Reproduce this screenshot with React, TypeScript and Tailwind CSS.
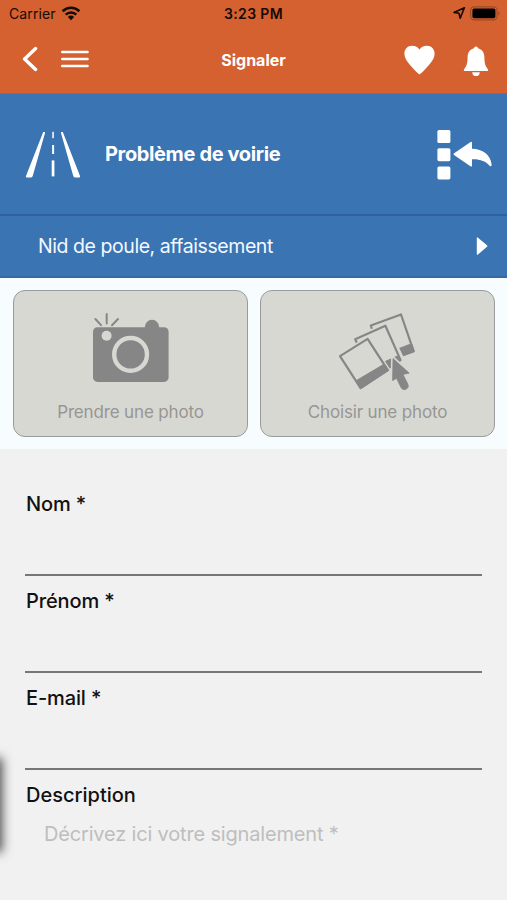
import { ReactNode } from 'react';

function WifiIcon() {
  return (
    <svg width="20" height="15" viewBox="0 0 20 15" fill="none" stroke="#160a05" strokeWidth="2.6">
      <path d="M1.6 5.2 A12 12 0 0 1 18.4 5.2" />
      <path d="M4.7 8.6 A7.6 7.6 0 0 1 15.3 8.6" />
      <path d="M10 14.2 L6.9 10.9 A4.4 4.4 0 0 1 13.1 10.9 Z" fill="#160a05" stroke="none" />
    </svg>
  );
}

function StatusBar() {
  return (
    <div className="grid h-[26px] grid-cols-3 items-center px-[6px] text-[14px] text-[#160a05]">
      <div className="flex items-center gap-[5px] pl-[3px]">
        <span className="tracking-[0.1px]">Carrier</span>
        <WifiIcon />
      </div>
      <span className="text-center font-semibold tracking-[0.35px] whitespace-nowrap">3:23 PM</span>
      <div className="flex items-center justify-end gap-[4px]">
        <svg width="14" height="14" viewBox="0 0 14 14" fill="none" stroke="#160a05" strokeWidth="1.6" strokeLinejoin="round">
          <path d="M12.4 1.7 L2 6.4 L7 7.3 L8.2 12.2 Z" />
        </svg>
        <svg width="31" height="15" viewBox="0 0 31 15">
          <rect x="0.6" y="0.9" width="26.5" height="13" rx="3.6" fill="none" stroke="#9c4a24" strokeWidth="1.1" />
          <rect x="2.4" y="2.6" width="23" height="9.6" rx="1.8" fill="#000" />
          <path d="M28.4 5.2 Q31 7.4 28.4 9.6 Z" fill="#9c4a24" />
        </svg>
      </div>
    </div>
  );
}

function NavBar() {
  return (
    <div className="grid h-[67px] grid-cols-3 items-center px-[18px] text-white">
      <div className="flex items-center gap-[23px] pb-[2px] pl-[4px]">
        <svg width="16" height="26" viewBox="0 0 16 26" fill="none" stroke="currentColor" strokeWidth="3.4">
          <path d="M13.6 2.6 L2.6 13 L13.6 23.4" strokeLinecap="round" strokeLinejoin="round" />
        </svg>
        <svg width="28" height="18" viewBox="0 0 28 18" stroke="currentColor" strokeWidth="2.4" strokeLinecap="round">
          <path d="M1.2 2 H26.6 M1.2 9 H26.6 M1.2 16 H26.6" />
        </svg>
      </div>
      <h1 className="text-center text-[16px] font-bold">Signaler</h1>
      <div className="flex items-center justify-end gap-[28px]">
        <svg width="31" height="30" viewBox="0 0 31 30" fill="currentColor">
          <path d="M15.5 29.6 C14.6 29 9.7 24.6 5.6 19.6 C2.5 15.8 0.4 12.6 0.4 8.8 C0.4 4.2 3.6 0.8 8 0.8 C11.4 0.8 14.2 2.3 15.5 4.8 C16.8 2.3 19.6 0.8 23 0.8 C27.4 0.8 30.6 4.2 30.6 8.8 C30.6 12.6 28.5 15.8 25.4 19.6 C21.3 24.6 16.4 29 15.5 29.6 Z" />
        </svg>
        <svg width="26" height="31" viewBox="0 0 26 31" fill="currentColor" className="mt-[3px]">
          <path d="M13 0.4 C14.1 0.4 14.8 1.1 15 2.3 C19 3.3 21.3 6.6 21.4 11 C21.5 17.5 22.2 20 24.9 23.2 C25.4 24 25.2 25 24.2 25 H1.8 C0.8 25 0.6 24 1.1 23.2 C3.8 20 4.5 17.5 4.6 11 C4.7 6.6 7 3.3 11 2.3 C11.2 1.1 11.9 0.4 13 0.4 Z" />
          <path d="M9.2 26.2 H16.8 C16.6 28.7 15.2 30.1 13 30.1 C10.8 30.1 9.4 28.7 9.2 26.2 Z" />
        </svg>
      </div>
    </div>
  );
}

function RoadIcon() {
  return (
    <svg width="56" height="48" viewBox="0 0 56 48" fill="#fff" className="mt-[2px]">
      <path d="M18.2 1 L20 1 Q20 2.5 19.6 3.6 L7.8 44.8 Q7.4 46.4 6 46.4 L1.6 46.4 Q0.4 46.2 1 45 Z" />
      <path d="M37.8 1 L36 1 Q36 2.5 36.4 3.6 L48.2 44.8 Q48.6 46.4 50 46.4 L54.4 46.4 Q55.6 46.2 55 45 Z" />
      <rect x="27.3" y="0.8" width="1.5" height="6.4" />
      <rect x="27.1" y="14" width="2" height="9" />
      <rect x="26.7" y="29.4" width="2.7" height="16" />
    </svg>
  );
}

function CategoryHeader() {
  return (
    <div className="border-t border-[#7a716f] bg-[#3a74b3] text-white">
      <div className="flex h-[122px] items-center border-b-2 border-[#2f619d] pr-[15px] pl-[25px]">
        <RoadIcon />
        <h2 className="ml-[24px] flex-1 text-[20px] font-bold tracking-[-0.37px]">Problème de voirie</h2>
        <svg width="55" height="50" viewBox="0 0 55 50" fill="currentColor" className="mt-px">
          <rect x="0.4" y="0" width="13" height="13" rx="1.6" />
          <rect x="0.4" y="18.2" width="13" height="13" rx="1.6" />
          <rect x="0.4" y="36.4" width="13" height="13" rx="1.6" />
          <path d="M16.8 23.6 Q16.2 24.4 17 25 L33.8 36.4 Q35 36.8 35 35.6 V29.2 C42 28.8 49 30.8 52.8 36 Q54.8 37 54.6 34.6 C53.6 24.8 45.6 19 35 18.8 V12.6 Q34.8 11.2 33.6 12 Z" />
        </svg>
      </div>
      <div className="flex h-[62px] items-center justify-between border-b-2 border-[#3469a6] pr-[19px] pl-[38px] text-[#f3f9ff]">
        <span className="pt-[2px] text-[19.5px] tracking-[-0.44px]">Nid de poule, affaissement</span>
        <svg width="12" height="18" viewBox="0 0 12 18" fill="#fff">
          <path d="M0.8 1 Q0.9 -0.2 2 0.8 L11 8.2 Q11.8 9 11 9.8 L2 17.4 Q0.9 18.2 0.8 17 Z" />
        </svg>
      </div>
    </div>
  );
}

function CameraIcon() {
  return (
    <svg width="78" height="72" viewBox="0 0 78 72">
      <path d="M3.4 6 L9 12.2 M14.7 1 V10.6 M26 6 L20 12.2" stroke="#868686" strokeWidth="2" strokeLinecap="round" fill="none" />
      <circle cx="60" cy="14" r="7.2" fill="#868686" />
      <rect x="1" y="14.3" width="75.6" height="54.6" rx="4.5" fill="#868686" />
      <circle cx="14.6" cy="22.8" r="5" fill="#d8d8d3" />
      <circle cx="38.6" cy="41.4" r="16.4" fill="none" stroke="#d8d8d3" strokeWidth="4.4" />
    </svg>
  );
}

function GalleryIcon() {
  return (
    <svg width="78" height="78" viewBox="1 0.5 78 78" strokeLinejoin="round">
      <g stroke="#868686" strokeWidth="2.2" fill="#d8d8d3">
        <path d="M32.8 13 L63 2 L75.6 38.6 L45 50 Z" />
        <path d="M44.4 43 L73.2 32 L75.6 38.6 L45.6 49.4 Z" fill="#868686" />
      </g>
      <path d="M17 27 L47.8 12.6 L64.4 48 L34 62 Z" fill="#d8d8d3" stroke="#d8d8d3" strokeWidth="5" />
      <path d="M17.2 26.8 L47.4 13.2 L62.6 47.6 L50 56 L30 54 Z" fill="#d8d8d3" stroke="#868686" strokeWidth="2.2" />
      <path d="M45 49.6 L59.6 43 L62.2 47.6 L50 56 Z" fill="#868686" />
      <path d="M2 43.6 L29.6 26.4 L49.8 57.6 L22.6 75.6 Z" fill="#d8d8d3" stroke="#d8d8d3" strokeWidth="5" />
      <path d="M2 43.6 L29.6 26.4 L49.8 57.6 L22.6 75.6 Z" fill="#d8d8d3" stroke="#868686" strokeWidth="2.2" />
      <path d="M18.6 68.6 L46 52.4 L49.6 57.8 L22.8 75.4 Z" fill="#868686" stroke="#868686" strokeWidth="2" />
      <path d="M55 46 L71.2 60.6 L65 62 L69.8 71.6 A3.8 3.8 0 0 1 63 75 L58.6 65.8 L54.6 68 Z" fill="#868686" stroke="#d8d8d3" strokeWidth="4" />
      <path d="M55 46 L71.2 60.6 L65 62 L69.8 71.6 A3.8 3.8 0 0 1 63 75 L58.6 65.8 L54.6 68 Z" fill="#868686" stroke="#868686" strokeWidth="0.8" />
    </svg>
  );
}

function PhotoButton({ icon, children }: { icon: ReactNode; children: ReactNode }) {
  return (
    <button className="flex h-[147px] flex-1 flex-col items-center rounded-[12px] border-[1.5px] border-[#999c9c] bg-[#d8d8d3] pt-[22px]">
      <span className="flex h-[87px] items-start">{icon}</span>
      <span className="text-[17px] leading-6 tracking-[-0.15px] text-[#969693]">{children}</span>
    </button>
  );
}

function Field({ label }: { label: string }) {
  return (
    <label className="flex h-[97px] flex-col border-b-2 border-[#777]">
      <span className="pt-[10.5px] pl-px text-[20px] leading-7 font-medium tracking-[-0.13px]">{label}</span>
      <input className="min-h-0 flex-1 bg-transparent outline-none" />
    </label>
  );
}

export default function App() {
  return (
    <div className="relative h-[900px] w-[507px] overflow-hidden bg-[#f1f1f1] font-['Inter','Liberation_Sans',sans-serif]">
      <header className="bg-[#d4612f]">
        <StatusBar />
        <NavBar />
      </header>
      <CategoryHeader />
      <div className="flex gap-[12px] bg-[#f7fdff] pt-[12px] pr-[12px] pb-[12px] pl-[13px]">
        <PhotoButton icon={<CameraIcon />}>Prendre une photo</PhotoButton>
        <PhotoButton icon={<GalleryIcon />}>Choisir une photo</PhotoButton>
      </div>
      <form className="px-[25px] pt-[30px] text-[#111]">
        <Field label="Nom *" />
        <Field label="Prénom *" />
        <Field label="E-mail *" />
        <label className="flex flex-col pt-[10.5px]">
          <span className="pl-px text-[20px] leading-7 font-medium">Description</span>
          <textarea
            placeholder="Décrivez ici votre signalement *"
            className="mt-[11.5px] h-[60px] resize-none bg-transparent pl-[19px] text-[20px] leading-7 tracking-[-0.17px] outline-none placeholder:text-[#bebebe]"
          />
        </label>
      </form>
      <div className="absolute top-[760px] -left-[10px] h-[90px] w-[10px] shadow-[0_0_11px_2px_rgba(0,0,0,0.7)]" />
    </div>
  );
}
